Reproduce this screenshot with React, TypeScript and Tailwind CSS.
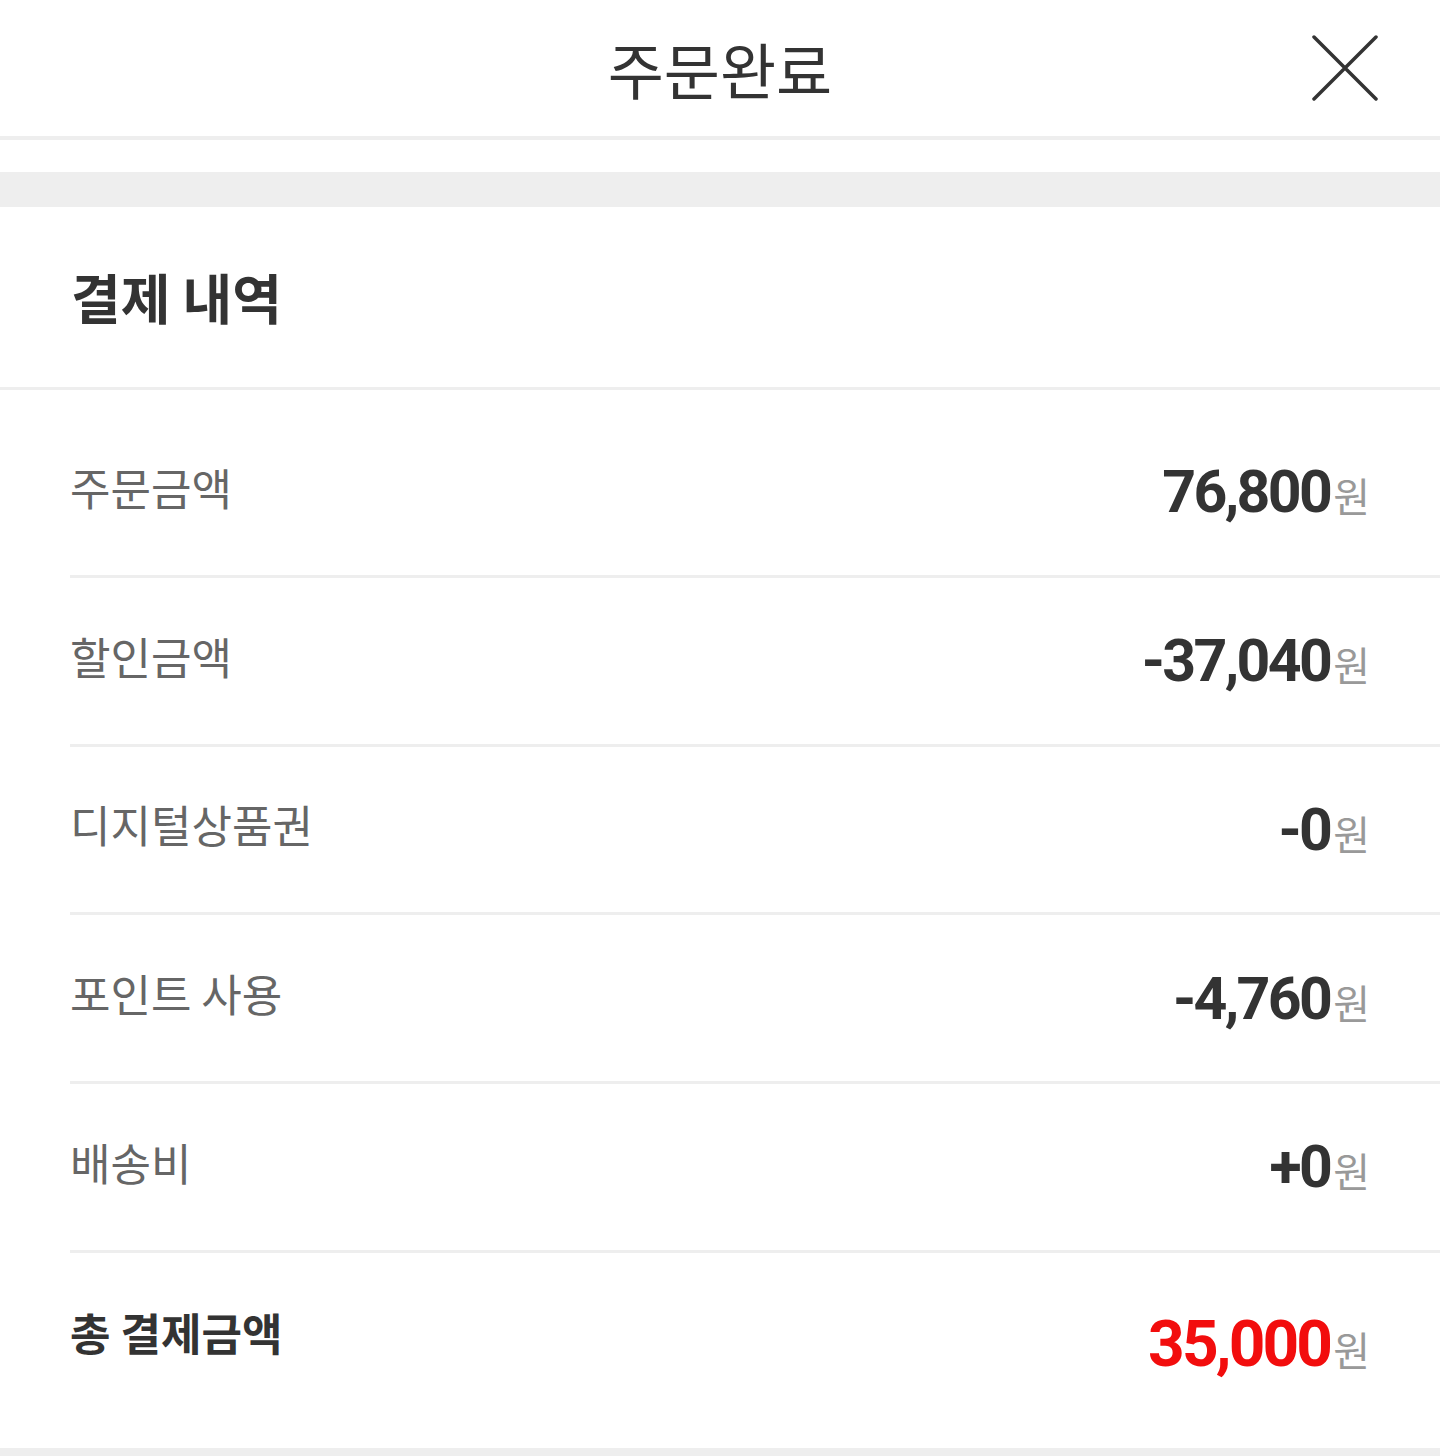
type Row = {
  label: string;
  value: string;
};

const rows: Row[] = [
  { label: "주문금액", value: "76,800" },
  { label: "할인금액", value: "-37,040" },
  { label: "디지털상품권", value: "-0" },
  { label: "포인트 사용", value: "-4,760" },
  { label: "배송비", value: "+0" },
];

const kr = "font-['Noto_Sans_CJK_KR',sans-serif]";
const num = "font-['Roboto',sans-serif]";

export default function App() {
  return (
    <main className={`min-h-[1456px] w-full bg-white ${kr}`}>
      {/* header */}
      <header className="grid h-[140px] grid-cols-[1fr_auto_1fr] items-center border-b-4 border-[#eeeeee]">
        <div />
        <h1 className="text-[61px] leading-none text-[#333333]">주문완료</h1>
        <div className="flex justify-end pr-[62px]">
          <svg width="66" height="66" viewBox="0 0 66 66" className="text-[#333333]">
            <path d="M2 2L64 64M64 2L2 64" stroke="currentColor" strokeWidth="3.5" strokeLinecap="round" />
          </svg>
        </div>
      </header>

      <div className="mt-[32px] h-[35px] bg-[#eeeeee]" />

      {/* 결제 내역 */}
      <section>
        <div className="flex h-[183px] items-center border-b-[3px] border-[#eeeeee] px-[71px]">
          <h2 className="text-[54px] font-bold leading-none text-[#333333]">결제 내역</h2>
        </div>

        <div className="pt-[19px]">
          {rows.map((row) => (
            <div
              key={row.label}
              className="ml-[70px] flex h-[168.75px] items-center justify-between border-b-[3px] border-[#eeeeee] pr-[70px]"
            >
              <p className="mb-[10px] text-[44px] leading-none text-[#666666]">{row.label}</p>
              <p className="flex items-baseline leading-none">
                <span className={`${num} text-[59px] font-bold tracking-[-0.045em] text-[#333333]`}>{row.value}</span>
                <span className="ml-[3px] text-[40px] text-[#999999]">원</span>
              </p>
            </div>
          ))}

          <div className="ml-[70px] flex h-[195px] items-center justify-between pr-[70px]">
            <p className="mb-[36px] text-[44px] font-bold leading-none text-[#333333]">총 결제금액</p>
            <p className="mb-[10px] flex items-baseline leading-none">
              <span className={`${num} text-[64px] font-bold tracking-[-0.045em] text-[#f20d0d]`}>35,000</span>
              <span className="ml-[3px] text-[40px] text-[#999999]">원</span>
            </p>
          </div>
        </div>
      </section>

      <div className="h-[9px] bg-[#eeeeee]" />
    </main>
  );
}
